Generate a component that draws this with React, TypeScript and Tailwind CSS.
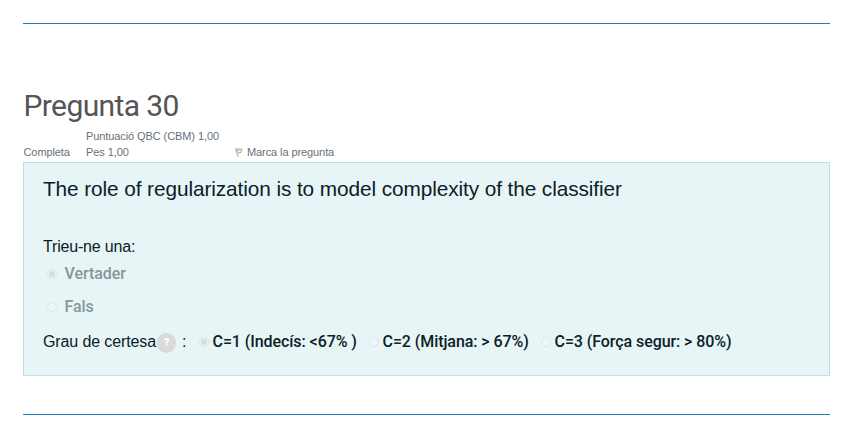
function Radio({ checked = false }: { checked?: boolean }) {
  return (
    <span className="flex h-[10px] w-[10px] shrink-0 items-center justify-center rounded-full border border-[#dde5e5] bg-[#ebf6f6]">
      {checked && <span className="h-[6px] w-[6px] rounded-full bg-[#d6dcdd]" />}
    </span>
  );
}

function Certainty({ label, width, checked }: { label: string; width: string; checked?: boolean }) {
  return (
    <label className={`flex items-center gap-[3.5px] ${width}`}>
      <Radio checked={checked} />
      <span className="whitespace-nowrap font-['Roboto',sans-serif] text-[16px] font-medium leading-6 tracking-[-0.07px]">
        {label}
      </span>
    </label>
  );
}

export default function App() {
  return (
    <main className="h-[438px] w-[850px] overflow-hidden bg-white pl-[23px] pr-5 pt-[23px] font-['Liberation_Sans',Arial,sans-serif] text-[#0b2027]">
      <hr className="h-px border-0 bg-[#2980b0]" />
      <h1 className="mt-[62px] h-[40px] whitespace-nowrap pl-[0.5px] font-['Roboto',sans-serif] text-[30px] leading-[40px] tracking-[-0.6px] text-[#555]">
        Pregunta 30
      </h1>
      <div className="mb-[2px] flex h-[34px] items-end whitespace-nowrap text-[11px] leading-4 tracking-[-0.09px] text-[#687078]">
        <div className="w-[63px] pl-[0.5px]">Completa</div>
        <div className="w-[149px]">
          <div>Puntuació QBC (CBM) 1,00</div>
          <div>Pes 1,00</div>
        </div>
        <div className="flex items-center gap-[4px]">
          <svg width="8" height="9" viewBox="0 0 8 9" fill="none" stroke="#999" strokeWidth="0.9">
            <path d="M.6.8 3.3 8.8M.4 1l7 .3L5.8 2.8l.5 1.4-3.8 1M1.7 2.8h2.5" />
          </svg>
          <span>Marca la pregunta</span>
        </div>
      </div>
      <section className="flex h-[214px] flex-col border border-[#bce0e5] bg-[#e7f5f6] pl-[19px] pt-[12px]">
        <p className="h-7 whitespace-nowrap text-[20.8px] leading-7 tracking-[-0.09px]">
          The role of regularization is to model complexity of the classifier
        </p>
        <p className="mt-8 h-6 text-[16px] leading-6 tracking-[-0.18px]">Trieu-ne una:</p>
        <div className="mt-[3px] flex h-6 items-center gap-[7.5px] pl-1 font-['Roboto',sans-serif] text-[16px] font-medium leading-6 tracking-[-0.07px] text-[#869799]">
          <Radio checked />
          <span>Vertader</span>
        </div>
        <div className="mt-[9px] flex h-6 items-center gap-[7.5px] pl-1 font-['Roboto',sans-serif] text-[16px] font-medium leading-6 tracking-[-0.07px] text-[#869799]">
          <Radio />
          <span>Fals</span>
        </div>
        <div className="mt-[11px] flex h-6 items-center whitespace-nowrap text-[16px] leading-6">
          <span className="w-[114px] tracking-[-0.12px]">Grau de certesa</span>
          <span className="mt-[2px] flex h-5 w-[19px] items-center justify-center rounded-full bg-[#dadada] font-['Roboto',sans-serif] text-[11px] font-black text-white">
            ?
          </span>
          <span className="ml-[6px] w-[17px]">:</span>
          <Certainty label="C=1 (Indecís: <67% )" width="w-[170px]" checked />
          <Certainty label="C=2 (Mitjana: > 67%)" width="w-[172px]" />
          <Certainty label="C=3 (Força segur: > 80%)" width="w-[192px]" />
        </div>
      </section>
      <hr className="mt-[38px] h-px border-0 bg-[#1f7fbd]" />
    </main>
  );
}
